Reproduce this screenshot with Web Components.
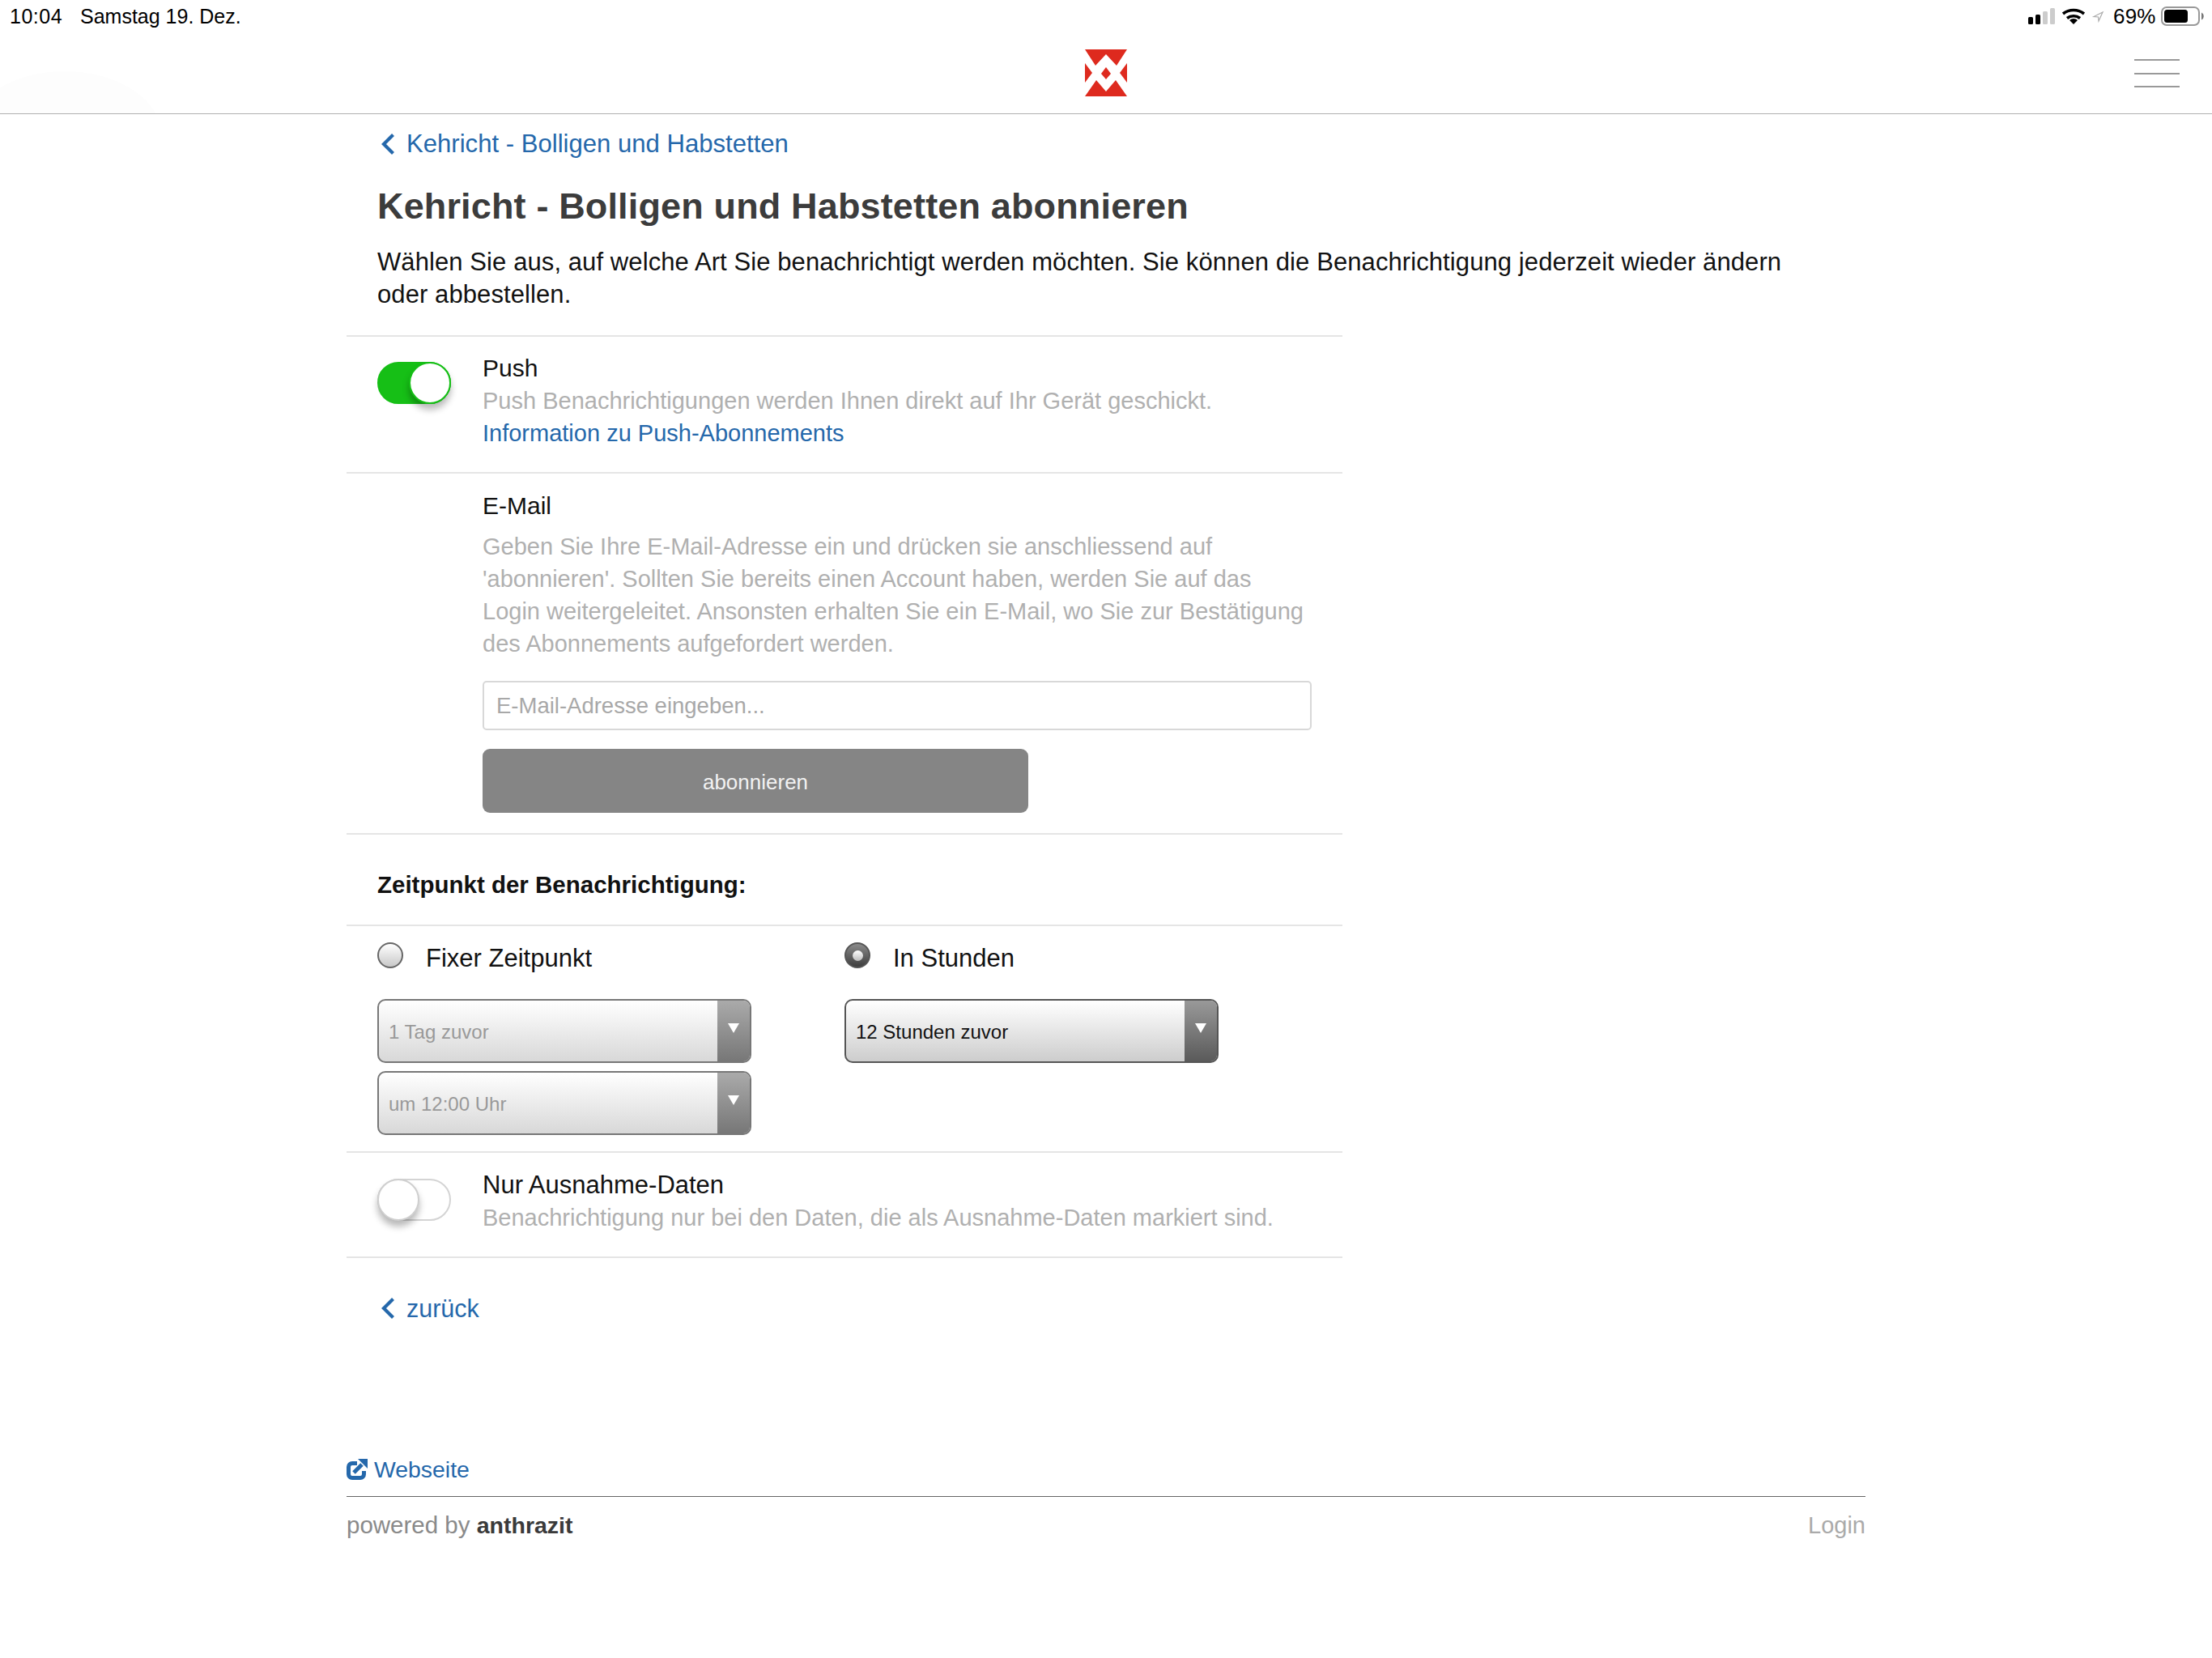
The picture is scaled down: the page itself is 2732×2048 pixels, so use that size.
<!DOCTYPE html>
<html lang="de">
<head>
<meta charset="utf-8">
<title>Kehricht abonnieren</title>
<style>
    html, body { margin: 0; background: #fff; }
    body { font-family: "Liberation Sans", Arial, sans-serif; font-size: 30px; line-height: 40px; color: #111; width: 2732px; height: 2048px; overflow: hidden; }
</style>
</head>
<body>
<app-shell>
    <status-bar></status-bar>
    <top-header></top-header>
    <main-column>
        <back-link>Kehricht - Bolligen und Habstetten</back-link>
        <page-intro>
            <span slot="title">Kehricht - Bolligen und Habstetten abonnieren</span>
            Wählen Sie aus, auf welche Art Sie benachrichtigt werden möchten. Sie können die Benachrichtigung jederzeit wieder ändern oder abbestellen.
        </page-intro>
        <settings-list>
            <setting-row style="--pb:28px">
                <toggle-switch slot="control" checked></toggle-switch>
                <span slot="title">Push</span>
                Push Benachrichtigungen werden Ihnen direkt auf Ihr Gerät geschickt.
                <a slot="link">Information zu Push-Abonnements</a>
            </setting-row>
            <email-row></email-row>
            <time-heading>Zeitpunkt der Benachrichtigung:</time-heading>
            <time-options></time-options>
            <setting-row style="--pt:20px;--pb:28px;--title:31px">
                <toggle-switch slot="control"></toggle-switch>
                <span slot="title">Nur Ausnahme-Daten</span>
                Benachrichtigung nur bei den Daten, die als Ausnahme-Daten markiert sind.
            </setting-row>
        </settings-list>
        <back-link style="--mt:42px;--fs:30.5px">zurück</back-link>
        <page-footer></page-footer>
    </main-column>
</app-shell>

<script>
// tiny helper, every element just stamps its markup into an open shadow root
class BaseElement extends HTMLElement {
    constructor() {
        super();
        this.attachShadow({ mode: 'open' });
        this.shadowRoot.innerHTML = this.markup();
    }
    markup() { return '<slot></slot>'; }
}

class AppShell extends BaseElement {
    markup() {
        return `<style>:host { display: block; }</style><slot></slot>`;
    }
}

class StatusBar extends BaseElement {
    markup() {
        return `
            <style>
                :host { display: flex; height: 40px; align-items: flex-start; padding: 0 5px 0 12px; color: #000; font-size: 25px; line-height: 40px; }
                .time { width: 87px; letter-spacing: 0.5px; }
                .date { flex: 1; }
                .tray { display: flex; }
                svg { display: block; }
                .pct { position: absolute; left: 2610px; top: 0; font-size: 26px; letter-spacing: 0.2px; }
            </style>
            <span class="time">10:04</span>
            <span class="date">Samstag 19. Dez.</span>
            <div class="tray">
                <svg width="222" height="40" viewBox="2505 0 222 40">
                    <rect x="2505" y="21" width="6" height="9" rx="1.5" fill="#000"/>
                    <rect x="2514" y="18" width="6" height="12" rx="1.5" fill="#000"/>
                    <rect x="2523" y="14" width="6" height="16" rx="1.5" fill="#ccc"/>
                    <rect x="2532" y="10" width="6" height="20" rx="1.5" fill="#ccc"/>
                    <path d="M2548 17 A 21 21 0 0 1 2574 17" fill="none" stroke="#000" stroke-width="3.6"/>
                    <path d="M2553 22.5 A 13 13 0 0 1 2569 22.5" fill="none" stroke="#000" stroke-width="3.6"/>
                    <path d="M2556 25 L2561 30 L2566 25 A 7 7 0 0 0 2556 25 Z" fill="#000"/>
                    <path d="M2597 15 L2586 20.5 L2591.5 21 L2592 26 Z" fill="none" stroke="#aaa" stroke-width="1.2"/>
                    <rect x="2670" y="9" width="46" height="22" rx="6" fill="none" stroke="#999" stroke-width="2"/>
                    <rect x="2673" y="12" width="29" height="16" rx="3.5" fill="#000"/>
                    <path d="M2719 15.5 a5 5 0 0 1 0 9 Z" fill="#777"/>
                </svg>
            </div>
            <span class="pct">69%</span>`;
    }
}

class TopHeader extends BaseElement {
    markup() {
        return `
            <style>
                :host { display: flex; position: relative; height: 100px; border-bottom: 1px solid #b0b0b0; justify-content: center; overflow: hidden; }
                .smudge { position: absolute; left: -40px; top: 48px; width: 240px; height: 160px; border-radius: 50%; background: #fdfdfd; }
                .logo { position: relative; margin-top: 21px; align-self: flex-start; }
                .burger { position: absolute; right: 40px; top: 33px; width: 56px; height: 35px; display: flex; flex-direction: column; justify-content: space-between; }
                .burger i { display: block; height: 2px; background: #999; }
            </style>
            <div class="smudge"></div>
            <svg class="logo" width="52" height="58" viewBox="0 0 52 58">
                <g fill="#de2a1e">
                    <polygon points="0,0 52,0 39,20 26,6 13,20"/>
                    <polygon points="0,17 9,29 0,41"/>
                    <polygon points="52,17 43,29 52,41"/>
                    <polygon points="26,22 32,30 26,37 20,30"/>
                    <polygon points="0,58 14,38 26,52 38,38 52,58"/>
                </g>
            </svg>
            <div class="burger"><i></i><i></i><i></i></div>`;
    }
}

class MainColumn extends BaseElement {
    markup() {
        return `<style>:host { display: block; margin-left: 428px; width: 1876px; }</style><slot></slot>`;
    }
}

class BackLink extends BaseElement {
    markup() {
        return `
            <style>
                :host { display: flex; align-items: center; height: 40px; margin-top: var(--mt, 17px); padding-left: 42px; color: #2568ab; font-size: var(--fs, 31.1px); }
                svg { display: block; margin-right: 14px; }
            </style>
            <svg width="18" height="26" viewBox="0 0 18 26"><path d="M15.5 1.5 L4 13 L15.5 24.5" fill="none" stroke="#2568ab" stroke-width="4.2"/></svg>
            <slot></slot>`;
    }
}

class PageIntro extends BaseElement {
    markup() {
        return `
            <style>
                :host { display: block; padding-left: 38px; width: 1770px; color: #111; font-size: 31px; letter-spacing: 0.09px; }
                h1 { margin: 27px 0 19px; font-size: 45px; letter-spacing: 0.15px; line-height: 60px; font-weight: 700; color: #3c3c3c; }
            </style>
            <h1><slot name="title"></slot></h1>
            <slot></slot>`;
    }
}

class SettingsList extends BaseElement {
    markup() {
        return `<style>:host { display: block; width: 1230px; margin-top: 30px; border-bottom: 2px solid #e5e5e5; }</style><slot></slot>`;
    }
}

class SettingRow extends BaseElement {
    markup() {
        return `
            <style>
                :host { display: grid; grid-template-columns: 168px 1fr; border-top: 2px solid #e5e5e5; padding: var(--pt, 19px) 0 var(--pb, 28px); color: #b0b0b0; font-size: 29px; }
                .ctl { padding: 12px 0 0 38px; }
                .title { display: block; color: #111; font-size: var(--title, 30px); }
                .link { display: block; color: #2568ab; }
            </style>
            <div class="ctl"><slot name="control"></slot></div>
            <div>
                <span class="title"><slot name="title"></slot></span>
                <slot></slot>
                <span class="link"><slot name="link"></slot></span>
            </div>`;
    }
}

class ToggleSwitch extends BaseElement {
    markup() {
        return `
            <style>
                :host { display: block; position: relative; width: 91px; height: 52px; box-sizing: border-box; border-radius: 26px; border: 2px solid #d4d4d4; background: #fff; }
                :host([checked]) { background: #16bf16; border-color: #16bf16; }
                .knob { position: absolute; left: -2px; top: -2px; width: 52px; height: 52px; box-sizing: border-box; border-radius: 50%; background: #fff; border: 2px solid #cfcfcf; box-shadow: 0 7px 9px rgba(0,0,0,.28); }
                :host([checked]) .knob { left: auto; right: -2px; border-color: #16bf16; }
            </style>
            <div class="knob"></div>`;
    }
}

class EmailRow extends BaseElement {
    markup() {
        return `
            <style>
                :host { display: block; border-top: 2px solid #e5e5e5; padding: 20px 0 25px 168px; color: #b0b0b0; font-size: 29px; }
                .title { color: #111; font-size: 30px; }
                p { margin: 10px 0 26px; width: 1024px; }
                .field { box-sizing: border-box; width: 1024px; height: 61px; border: 2px solid #d8d8d8; border-radius: 5px; padding: 0 15px; line-height: 57px; font-size: 27.5px; color: #a8a8a8; }
                .btn { width: 674px; height: 79px; margin-top: 23px; background: #858585; border-radius: 9px; color: #f2f2f2; font-size: 26px; line-height: 83px; text-align: center; }
            </style>
            <div class="title">E-Mail</div>
            <p>Geben Sie Ihre E-Mail-Adresse ein und drücken sie anschliessend auf 'abonnieren'. Sollten Sie bereits einen Account haben, werden Sie auf das Login weitergeleitet. Ansonsten erhalten Sie ein E-Mail, wo Sie zur Bestätigung des Abonnements aufgefordert werden.</p>
            <div class="field">E-Mail-Adresse eingeben...</div>
            <div class="btn">abonnieren</div>`;
    }
}

class TimeHeading extends BaseElement {
    markup() {
        return `<style>:host { display: block; border-top: 2px solid #e5e5e5; padding: 42px 0 29px 38px; font-weight: 700; font-size: 29.5px; color: #111; }</style><slot></slot>`;
    }
}

class RadioOption extends BaseElement {
    markup() {
        return `
            <style>
                :host { display: flex; height: 40px; color: #111; font-size: 31px; }
                .dot { box-sizing: border-box; width: 32px; height: 32px; border-radius: 50%; border: 2px solid #666; background: linear-gradient(#fff, #c8c8c8); display: flex; align-items: center; justify-content: center; margin-right: var(--gap, 28px); }
                :host([checked]) .dot { background: linear-gradient(#8a8a8a, #3e3e3e); border-color: #555; }
                :host([checked]) .dot::after { content: ""; width: 13px; height: 13px; border-radius: 50%; background: linear-gradient(#fff, #bbb); }
            </style>
            <div class="dot"></div>
            <span><slot></slot></span>`;
    }
}

class SelectBox extends BaseElement {
    markup() {
        return `
            <style>
                :host { display: flex; box-sizing: border-box; width: 462px; height: 79px; margin-bottom: 10px; border: 2px solid #555; border-radius: 10px; overflow: hidden; background: linear-gradient(#fff, #cdcdcd); color: #111; font-size: 24px; line-height: 77px; }
                :host([disabled]) { border-color: #777; background: linear-gradient(#fff, #d8d8d8); color: #999; }
                .txt { flex: 1; padding-left: 12px; }
                .arrow { width: 40px; background: linear-gradient(#999, #5a5a5a); display: flex; justify-content: center; padding-top: 28px; box-sizing: border-box; }
                :host([disabled]) .arrow { background: linear-gradient(#aaa, #777); }
                .arrow i { width: 0; height: 0; border: 7px solid transparent; border-top: 12px solid #fff; border-bottom: 0; }
            </style>
            <div class="txt"><slot></slot></div>
            <div class="arrow"><i></i></div>`;
    }
}

class TimeOptions extends BaseElement {
    markup() {
        return `
            <style>
                :host { display: grid; grid-template-columns: 577px 1fr; height: 258px; border-top: 2px solid #e5e5e5; padding: 20px 0 0 38px; }
                radio-option { margin-bottom: 30px; }
            </style>
            <div>
                <radio-option>Fixer Zeitpunkt</radio-option>
                <select-box disabled>1 Tag zuvor</select-box>
                <select-box disabled>um 12:00 Uhr</select-box>
            </div>
            <div>
                <radio-option checked>In Stunden</radio-option>
                <select-box>12 Stunden zuvor</select-box>
            </div>`;
    }
}

class PageFooter extends BaseElement {
    markup() {
        return `
            <style>
                :host { display: block; margin-top: 159px; color: #8a8a8a; font-size: 29.5px; }
                .web { display: flex; align-items: center; height: 40px; color: #2568ab; font-size: 28.4px; }
                svg { display: block; margin-right: 8px; }
                .bottom { display: flex; justify-content: space-between; margin-top: 13px; padding-top: 15px; border-top: 1px solid #666; }
                b { color: #3a3a3a; font-size: 28.5px; }
                .login { color: #aaa; font-size: 29px; }
            </style>
            <div class="web">
                <svg width="26" height="26" viewBox="0 0 26 26">
                    <path d="M13 5.5 H7 a4.5 4.5 0 0 0-4.5 4.5 v9 a4.5 4.5 0 0 0 4.5 4.5 h10 a4.5 4.5 0 0 0 4.5-4.5 v-4" fill="none" stroke="#2568ab" stroke-width="5"/>
                    <path d="M9 17 L19 7" fill="none" stroke="#2568ab" stroke-width="5"/>
                    <polygon points="14,0 26,0 26,12" fill="#2568ab"/>
                </svg>
                <span>Webseite</span>
            </div>
            <div class="bottom">
                <span>powered by <b>anthrazit</b></span>
                <span class="login">Login</span>
            </div>`;
    }
}

customElements.define('app-shell', AppShell);
customElements.define('status-bar', StatusBar);
customElements.define('top-header', TopHeader);
customElements.define('main-column', MainColumn);
customElements.define('back-link', BackLink);
customElements.define('page-intro', PageIntro);
customElements.define('settings-list', SettingsList);
customElements.define('setting-row', SettingRow);
customElements.define('toggle-switch', ToggleSwitch);
customElements.define('email-row', EmailRow);
customElements.define('time-heading', TimeHeading);
customElements.define('radio-option', RadioOption);
customElements.define('select-box', SelectBox);
customElements.define('time-options', TimeOptions);
customElements.define('page-footer', PageFooter);
</script>
</body>
</html>
